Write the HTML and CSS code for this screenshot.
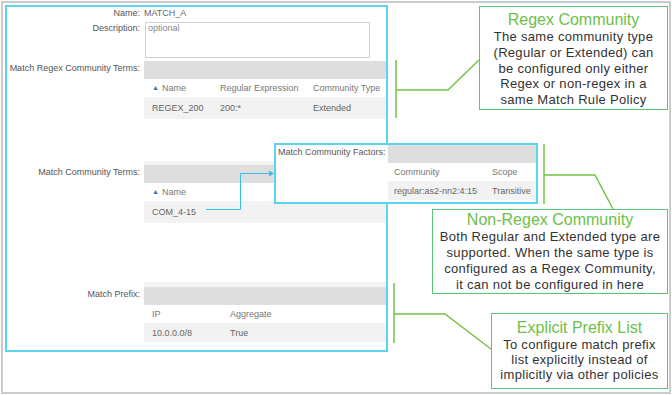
FILE: index.html
```html
<!DOCTYPE html>
<html lang="en">

<head>
    <meta charset="UTF-8">
    <title>Match Rule Policy</title>
    <link rel="stylesheet" href="styles.css">
</head>

<body>
    <div class="canvas">
        <div class="screen">
            <div class="policy">
                <div class="row row-name">
                    <span class="label">Name:</span>
                    <span class="value">MATCH_A</span>
                </div>
                <div class="row row-desc">
                    <span class="label">Description:</span>
                    <div class="textarea">optional</div>
                </div>
                <div class="row row-regex">
                    <span class="label">Match Regex Community Terms:</span>
                    <div class="table">
                        <div class="table-bar"></div>
                        <div class="table-head">
                            <span class="col col-a"><i class="sort">&#9650;</i>Name</span>
                            <span class="col col-b">Regular Expression</span>
                            <span class="col">Community Type</span>
                        </div>
                        <div class="table-row">
                            <span class="col col-a">REGEX_200</span>
                            <span class="col col-b">200:*</span>
                            <span class="col">Extended</span>
                        </div>
                    </div>
                </div>
                <div class="row row-community">
                    <span class="label">Match Community Terms:</span>
                    <div class="table">
                        <div class="table-band"></div>
                        <div class="table-bar"></div>
                        <div class="table-head">
                            <span class="col"><i class="sort">&#9650;</i>Name</span>
                        </div>
                        <div class="table-row">
                            <span class="col">COM_4-15</span>
                        </div>
                    </div>
                </div>
                <div class="row row-prefix">
                    <span class="label">Match Prefix:</span>
                    <div class="table">
                        <div class="table-band"></div>
                        <div class="table-bar"></div>
                        <div class="table-head">
                            <span class="col col-ip">IP</span>
                            <span class="col">Aggregate</span>
                        </div>
                        <div class="table-row table-row-short">
                            <span class="col col-ip">10.0.0.0/8</span>
                            <span class="col">True</span>
                        </div>
                    </div>
                </div>
            </div>
        </div>

        <div class="popup">
            <span class="popup-label">Match Community Factors:</span>
            <div class="table">
                <div class="table-bar"></div>
                <div class="table-head">
                    <span class="col col-comm">Community</span>
                    <span class="col">Scope</span>
                </div>
                <div class="table-row table-row-short">
                    <span class="col col-comm">regular:as2-nn2:4:15</span>
                    <span class="col">Transitive</span>
                </div>
            </div>
        </div>

        <svg class="notes" width="672" height="395" viewBox="0 0 672 395">
            <g class="arrow">
                <polyline points="206,209.5 240.5,209.5 240.5,173.5 270,173.5" />
                <polygon points="269,170.5 274,173.5 269,176.5" />
            </g>
            <g class="bracket">
                <path d="M396 60 V118 M396 90 H448 L479 60" />
                <path d="M544 144 V204 M544 175 H595 L613 209" />
                <path d="M394 283 V343 M394 314 H445 L491 349" />
            </g>
        </svg>

        <div class="callout callout-regex">
            <h3>Regex Community</h3>
            <p>The same community type<br>(Regular or Extended) can<br>be configured only either<br>Regex or non-regex in a<br>same Match Rule Policy</p>
        </div>
        <div class="callout callout-plain">
            <h3>Non-Regex Community</h3>
            <p>Both Regular and Extended type are<br>supported. When the same type is<br>configured as a Regex Community,<br>it can not be configured in here</p>
        </div>
        <div class="callout callout-prefix">
            <h3>Explicit Prefix List</h3>
            <p>To configure match prefix<br>list explicitly instead of<br>implicitly via other policies</p>
        </div>
    </div>
</body>

</html>
```

FILE: styles.css
```css
* {
    box-sizing: border-box;
}

body {
    margin: 0;
    background: #fff;
    font-family: "Liberation Sans", Arial, sans-serif;
}

.canvas {
    position: relative;
    width: 672px;
    height: 395px;
    overflow: hidden;
}

.screen {
    margin: 1px 0 0 1px;
    width: 670px;
    height: 393px;
    border: 2px solid #cbcbcb;
    padding: 2px;
}

.policy {
    width: 383px;
    height: 347px;
    border: 2px solid #5dd3f2;
    font-size: 9px;
    color: #666;
}

.row {
    display: flex;
    align-items: flex-start;
}

.label {
    width: 137px;
    flex: none;
    padding-right: 4px;
    text-align: right;
    color: #555;
    line-height: 14px;
}

.row-name {
    line-height: 12px;
}

.row-name .label {
    line-height: 12px;
}

.row-desc {
    margin-top: 3px;
}

.row-desc .label {
    line-height: 12px;
}

.textarea {
    margin-left: 1px;
    width: 225px;
    height: 36px;
    border: 1px solid #cfcfcf;
    padding: 0 2px;
    line-height: 11px;
    color: #888;
}

.row-regex {
    margin-top: 3px;
}

.row-community {
    margin-top: 42px;
}

.row-community .label {
    padding-top: 4px;
}

.row-prefix {
    margin-top: 59px;
}

.row-prefix .label {
    padding-top: 5px;
}

.table {
    flex: 1;
    min-width: 0;
}

.table-band {
    height: 4px;
    background: #f3f3f3;
}

.row-prefix .table-band {
    height: 5px;
}

.table-bar {
    height: 18px;
    background: #dedede;
}

.table-head,
.table-row {
    display: flex;
    align-items: center;
    padding-left: 8px;
    white-space: nowrap;
}

.table-head {
    height: 18px;
    color: #777;
}

.table-row {
    height: 22px;
    background: #f2f2f2;
}

.table-row-short {
    height: 19px;
}

.col-a {
    width: 68px;
}

.col-b {
    width: 93px;
}

.col-ip {
    width: 78px;
}

.sort {
    font-style: normal;
    font-size: 7px;
    color: #2f76d2;
    margin-right: 3px;
    vertical-align: 1px;
}

.popup {
    position: absolute;
    left: 274px;
    top: 143px;
    width: 264px;
    height: 61px;
    border: 2px solid #5dd3f2;
    background: #fff;
    display: flex;
    font-size: 9px;
    color: #666;
}

.popup-label {
    width: 112px;
    flex: none;
    padding-left: 2px;
    line-height: 14px;
    color: #555;
}

.popup .table-head,
.popup .table-row {
    padding-left: 6px;
}

.col-comm {
    width: 98px;
}

.notes {
    position: absolute;
    left: 0;
    top: 0;
    pointer-events: none;
}

.arrow polyline {
    fill: none;
    stroke: #36c0e6;
    stroke-width: 1;
}

.arrow polygon {
    fill: #36c0e6;
}

.bracket path {
    fill: none;
    stroke: #74c447;
    stroke-width: 1.5;
}

.callout {
    position: absolute;
    border: 1.5px solid #5cc575;
    background: #fff;
    text-align: center;
    color: #333;
    white-space: nowrap;
}

.callout h3 {
    margin: 0;
    font-weight: normal;
    font-size: 16px;
    line-height: 18px;
    color: #6cbf4a;
}

.callout p {
    margin: 0;
    font-size: 13px;
    letter-spacing: 0.3px;
    line-height: 15.75px;
}

.callout-regex {
    left: 479px;
    top: 6px;
    width: 189px;
    height: 104px;
    padding-top: 4px;
}

.callout-plain {
    left: 432px;
    top: 209px;
    width: 236px;
    height: 85px;
    padding-top: 1px;
}

.callout-plain p {
    line-height: 16px;
}

.callout-prefix {
    left: 491px;
    top: 313px;
    width: 177px;
    height: 76px;
    padding-top: 5px;
}

.callout-prefix p {
    line-height: 15px;
}
```
